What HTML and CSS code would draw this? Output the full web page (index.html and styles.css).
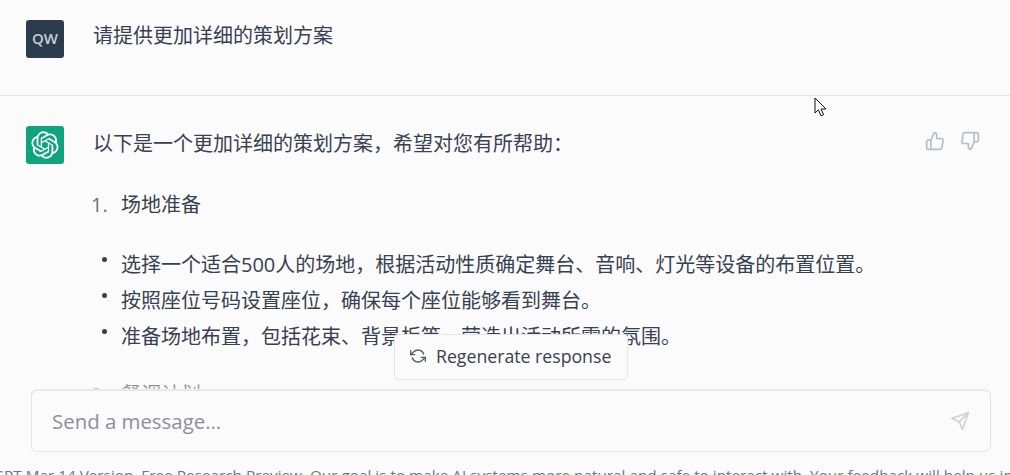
FILE: index.html
```html
<html>
<head>
<meta http-equiv="Content-Type" content="text/html; charset=utf-8" />
<link rel="stylesheet" href="styles.css">
</head>
<body>
<div class="wrapper">
    <div class="msgRow userRow">
        <div class="avatar userAvatar">QW</div>
        <div class="msgBody"><p class="line">请提供更加详细的策划方案</p></div>
    </div>
    <div class="msgRow botRow">
        <div class="avatar botAvatar">
            <svg width="28" height="28" viewBox="0 0 41 41"><path fill="#fff" d="M37.5324 16.8707C37.9808 15.5241 38.1363 14.0974 37.9886 12.6859C37.8409 11.2744 37.3934 9.91076 36.676 8.68622C35.6126 6.83404 33.9882 5.3676 32.0373 4.4985C30.0864 3.62941 27.9098 3.40259 25.8215 3.85078C24.8796 2.7893 23.7219 1.94125 22.4257 1.36341C21.1295 0.785575 19.7249 0.491269 18.3058 0.500197C16.1708 0.495044 14.0893 1.16803 12.3614 2.42214C10.6335 3.67624 9.34853 5.44666 8.6917 7.47815C7.30085 7.76286 5.98686 8.3414 4.8377 9.17505C3.68854 10.0087 2.73073 11.0782 2.02839 12.312C0.956464 14.1591 0.498905 16.2988 0.721698 18.4228C0.944492 20.5467 1.83612 22.5449 3.268 24.1293C2.81966 25.4759 2.66413 26.9026 2.81182 28.3141C2.95951 29.7256 3.40701 31.0892 4.12437 32.3138C5.18791 34.1659 6.8123 35.6322 8.76321 36.5013C10.7141 37.3704 12.8907 37.5973 14.9789 37.1492C15.9208 38.2107 17.0786 39.0587 18.3747 39.6366C19.6709 40.2144 21.0755 40.5087 22.4946 40.4998C24.6307 40.5054 26.7133 39.8321 28.4418 38.5772C30.1704 37.3223 31.4556 35.5506 32.1119 33.5179C33.5027 33.2332 34.8167 32.6547 35.9659 31.821C37.115 30.9874 38.0728 29.9178 38.7752 28.684C39.8458 26.8371 40.3023 24.6979 40.0789 22.5748C39.8556 20.4517 38.9639 18.4544 37.5324 16.8707ZM22.4978 37.8849C20.7443 37.8874 19.0459 37.2733 17.6994 36.1501C17.7601 36.117 17.8666 36.0586 17.936 36.0161L25.9004 31.4156C26.1003 31.3019 26.2663 31.137 26.3813 30.9378C26.4964 30.7386 26.5563 30.5124 26.5549 30.2825V19.0542L29.9213 20.998C29.9389 21.0068 29.9541 21.0198 29.9656 21.0359C29.977 21.052 29.9842 21.0707 29.9867 21.0902V30.3889C29.9842 32.375 29.1946 34.2791 27.7909 35.6841C26.3872 37.0892 24.4838 37.8806 22.4978 37.8849ZM6.39227 31.0064C5.51397 29.4888 5.19742 27.7107 5.49804 25.9832C5.55718 26.0187 5.66048 26.0818 5.73461 26.1244L13.699 30.7248C13.8975 30.8408 14.1233 30.902 14.3532 30.902C14.583 30.902 14.8088 30.8408 15.0073 30.7248L24.731 25.1103V28.9979C24.7321 29.0177 24.7283 29.0376 24.7199 29.0556C24.7115 29.0736 24.6988 29.0893 24.6829 29.1012L16.6317 33.7497C14.9096 34.7416 12.8643 35.0097 10.9447 34.4954C9.02506 33.9811 7.38785 32.7263 6.39227 31.0064ZM4.29707 13.6194C5.17156 12.0998 6.55279 10.9364 8.19885 10.3327C8.19885 10.4013 8.19491 10.5228 8.19491 10.6071V19.808C8.19351 20.0378 8.25334 20.2638 8.36823 20.4629C8.48312 20.6619 8.64893 20.8267 8.84863 20.9404L18.5723 26.5542L15.206 28.4979C15.1894 28.5089 15.1703 28.5155 15.1505 28.5173C15.1307 28.5191 15.1107 28.516 15.0924 28.5082L7.04046 23.8557C5.32135 22.8601 4.06716 21.2235 3.55289 19.3046C3.03862 17.3858 3.30624 15.3413 4.29707 13.6194ZM31.955 20.0556L22.2312 14.4411L25.5976 12.4981C25.6142 12.4872 25.6333 12.4805 25.6531 12.4787C25.6729 12.4769 25.6928 12.4801 25.7111 12.4879L33.7631 17.1364C34.9967 17.849 36.0017 18.8982 36.6606 20.1613C37.3194 21.4244 37.6047 22.849 37.4832 24.2684C37.3617 25.6878 36.8382 27.0432 35.9743 28.1759C35.1103 29.3086 33.9415 30.1717 32.6047 30.6641C32.6047 30.5947 32.6047 30.4733 32.6047 30.3889V21.188C32.6066 20.9586 32.5474 20.7328 32.4332 20.5338C32.319 20.3348 32.154 20.1698 31.955 20.0556ZM35.3055 15.0128C35.2464 14.9765 35.1431 14.9142 35.069 14.8717L27.1045 10.2712C26.906 10.1554 26.6803 10.0943 26.4504 10.0943C26.2206 10.0943 25.9948 10.1554 25.7963 10.2712L16.0726 15.8858V11.9982C16.0715 11.9783 16.0753 11.9585 16.0837 11.9405C16.0921 11.9225 16.1048 11.9068 16.1207 11.8949L24.1719 7.25025C25.4053 6.53903 26.8158 6.19376 28.2383 6.25482C29.6608 6.31589 31.0364 6.78077 32.2044 7.59508C33.3723 8.40939 34.2842 9.53945 34.8334 10.8531C35.3826 12.1667 35.5464 13.6095 35.3055 15.0128ZM14.2424 21.9419L10.8752 19.9981C10.8576 19.9893 10.8423 19.9763 10.8309 19.9602C10.8195 19.9441 10.8122 19.9254 10.8098 19.9058V10.6071C10.8107 9.18295 11.2173 7.78848 11.9819 6.58696C12.7466 5.38544 13.8377 4.42659 15.1275 3.82264C16.4173 3.21869 17.8524 2.99464 19.2649 3.1767C20.6775 3.35876 22.0089 3.93941 23.1034 4.85067C23.0427 4.88379 22.937 4.94215 22.8668 4.98473L14.9024 9.58517C14.7025 9.69878 14.5366 9.86356 14.4215 10.0626C14.3065 10.2616 14.2466 10.4877 14.2479 10.7175L14.2424 21.9419ZM16.071 17.9991L20.4018 15.4978L24.7325 17.9975V22.9985L20.4018 25.4983L16.071 22.9985V17.9991Z"/></svg>
        </div>
        <div class="msgBody">
            <p class="line">以下是一个更加详细的策划方案，希望对您有所帮助：</p>
            <div class="numItem"><span class="num">1.</span>场地准备</div>
            <ul class="bullets">
                <li>选择一个适合500人的场地，根据活动性质确定舞台、音响、灯光等设备的布置位置。</li>
                <li>按照座位号码设置座位，确保每个座位能够看到舞台。</li>
                <li>准备场地布置，包括花束、背景板等，营造出活动所需的氛围。</li>
            </ul>
            <div class="numItem"><span class="num">2.</span>餐调计划</div>
        </div>
        <div class="thumbs">
            <svg width="20" height="20" viewBox="0 0 24 24"><path d="M14 9V5a3 3 0 0 0-3-3l-4 9v11h11.28a2 2 0 0 0 2-1.7l1.38-9a2 2 0 0 0-2-2.3zM7 22H4a2 2 0 0 1-2-2v-7a2 2 0 0 1 2-2h3"/></svg>
            <svg width="20" height="20" viewBox="0 0 24 24"><path d="M10 15v4a3 3 0 0 0 3 3l4-9V2H5.72a2 2 0 0 0-2 1.7l-1.38 9a2 2 0 0 0 2 2.3zm7-13h2.67A2.31 2.31 0 0 1 22 4v7a2.31 2.31 0 0 1-2.33 2H17"/></svg>
        </div>
    </div>

    <div class="bottomBar">
        <div class="regenBtn">
            <svg width="16" height="16" viewBox="0 0 24 24"><polyline points="1 4 1 10 7 10"/><polyline points="23 20 23 14 17 14"/><path d="M20.49 9A9 9 0 0 0 5.64 5.64L1 10m22 4l-4.64 4.36A9 9 0 0 1 3.51 15"/></svg>
            <span class="regenLabel">Regenerate response</span>
        </div>
        <div class="fade"></div>
        <div class="inputBox">
            <span class="placeholder">Send a message...</span>
            <svg class="sendIcon" width="20" height="20" viewBox="0 0 24 24"><line x1="22" y1="2" x2="11" y2="13"/><polygon points="22 2 15 22 11 13 2 9 22 2"/></svg>
        </div>
        <div class="footNote">ChatGPT Mar 14 Version. Free Research Preview. Our goal is to make AI systems more natural and safe to interact with. Your feedback will help us improve.</div>
    </div>

    <svg class="cursor" width="14" height="20" viewBox="0 0 14 20"><path d="M1 1v15l3.4-3.2 2.6 6 2.6-1.1-2.6-5.7h5z"/></svg>
</div>
</body>
</html>
```

FILE: styles.css
```css
html, body {
    margin: 0;
    padding: 0;
    background-color: #FBFBFC;
}
.wrapper {
    position: relative;
    width: 1010px;
    height: 475px;
    overflow: hidden;
    color: #374151;
    font: 20px/30px 'Open Sans','Noto Sans CJK SC',sans-serif;
}
.msgRow {
    display: flex;
    padding: 20px 26px 0;
}
.userRow {
    height: 75px;
    border-bottom: 1px solid #E5E5E8;
}
.botRow {
    padding-top: 30px;
}
.avatar {
    flex: none;
    width: 38px;
    height: 38px;
    border-radius: 3px;
    display: flex;
    align-items: center;
    justify-content: center;
}
.userAvatar {
    box-sizing: border-box;
    padding-bottom: 2px;
    background-color: #2B3C4F;
    color: #C9CDD6;
    font: 600 15px/36px 'Open Sans',sans-serif;
}
.botAvatar {
    background-color: #0FA47F;
}
.msgBody {
    flex: 1;
    margin-left: 29px;
}
.line {
    margin: 0;
}
.userRow .line {
    margin-top: 1px;
}
.botRow .line {
    margin-top: 3px;
}
.numItem {
    margin-top: 31px;
    padding-left: 28px;
    position: relative;
}
.num {
    position: absolute;
    left: -2px;
    color: #6B7280;
}
.bullets {
    list-style: none;
    margin: 27px 0 0;
    padding: 0 0 0 28px;
    line-height: 36px;
}
.bullets li {
    position: relative;
}
.bullets li:before {
    content: "";
    position: absolute;
    left: -19px;
    top: 10px;
    width: 5px;
    height: 5px;
    border-radius: 50%;
    background-color: #374151;
}
.bullets + .numItem {
    margin-top: 25px;
}
.thumbs {
    display: flex;
    gap: 15px;
    flex: none;
    margin: 5px 4px 0 0;
}
.thumbs svg {
    fill: none;
    stroke: #B9BCCB;
    stroke-width: 2;
    stroke-linecap: round;
    stroke-linejoin: round;
}
.bottomBar {
    position: absolute;
    left: 0;
    right: 0;
    bottom: 0;
    height: 141px;
}
.regenBtn {
    position: absolute;
    left: 394px;
    top: 0;
    width: 234px;
    height: 46px;
    box-sizing: border-box;
    border: 1px solid #E5E5E8;
    border-radius: 4px;
    background-color: #FBFBFC;
    display: flex;
    align-items: center;
    gap: 10px;
    padding: 0 0 2px 15px;
    z-index: 2;
}
.regenLabel {
    font-size: 17.7px;
}
.regenBtn svg {
    fill: none;
    stroke: #555B66;
    stroke-width: 2;
    stroke-linecap: round;
    stroke-linejoin: round;
}
.fade {
    position: absolute;
    left: 0;
    right: 0;
    top: 46px;
    height: 10px;
    background: linear-gradient(to bottom, rgba(251,251,252,0.2), rgba(251,251,252,0.6));
}
.inputBox {
    position: absolute;
    left: 31px;
    top: 56px;
    width: 960px;
    height: 62px;
    box-sizing: border-box;
    border: 1px solid #E5E5E8;
    border-radius: 6px;
    background-color: #FBFBFC;
    box-shadow: 0 -1px 1px #EDEDF0;
    display: flex;
    align-items: center;
    justify-content: space-between;
    padding: 0 20px 1px;
}
.placeholder {
    color: #8E8EA0;
    font-size: 20.4px;
}
.sendIcon {
    fill: none;
    stroke: #CFD1DA;
    stroke-width: 2;
    stroke-linecap: round;
    stroke-linejoin: round;
}
.footNote {
    position: absolute;
    top: 131px;
    left: -42px;
    width: 1300px;
    white-space: nowrap;
    padding-left: 2px;
    font-size: 15.3px;
    line-height: 20px;
    color: #73737F;
}
.cursor {
    position: absolute;
    left: 814px;
    top: 97px;
}
.cursor path {
    fill: #fff;
    stroke: #111;
    stroke-width: 1;
}
```
